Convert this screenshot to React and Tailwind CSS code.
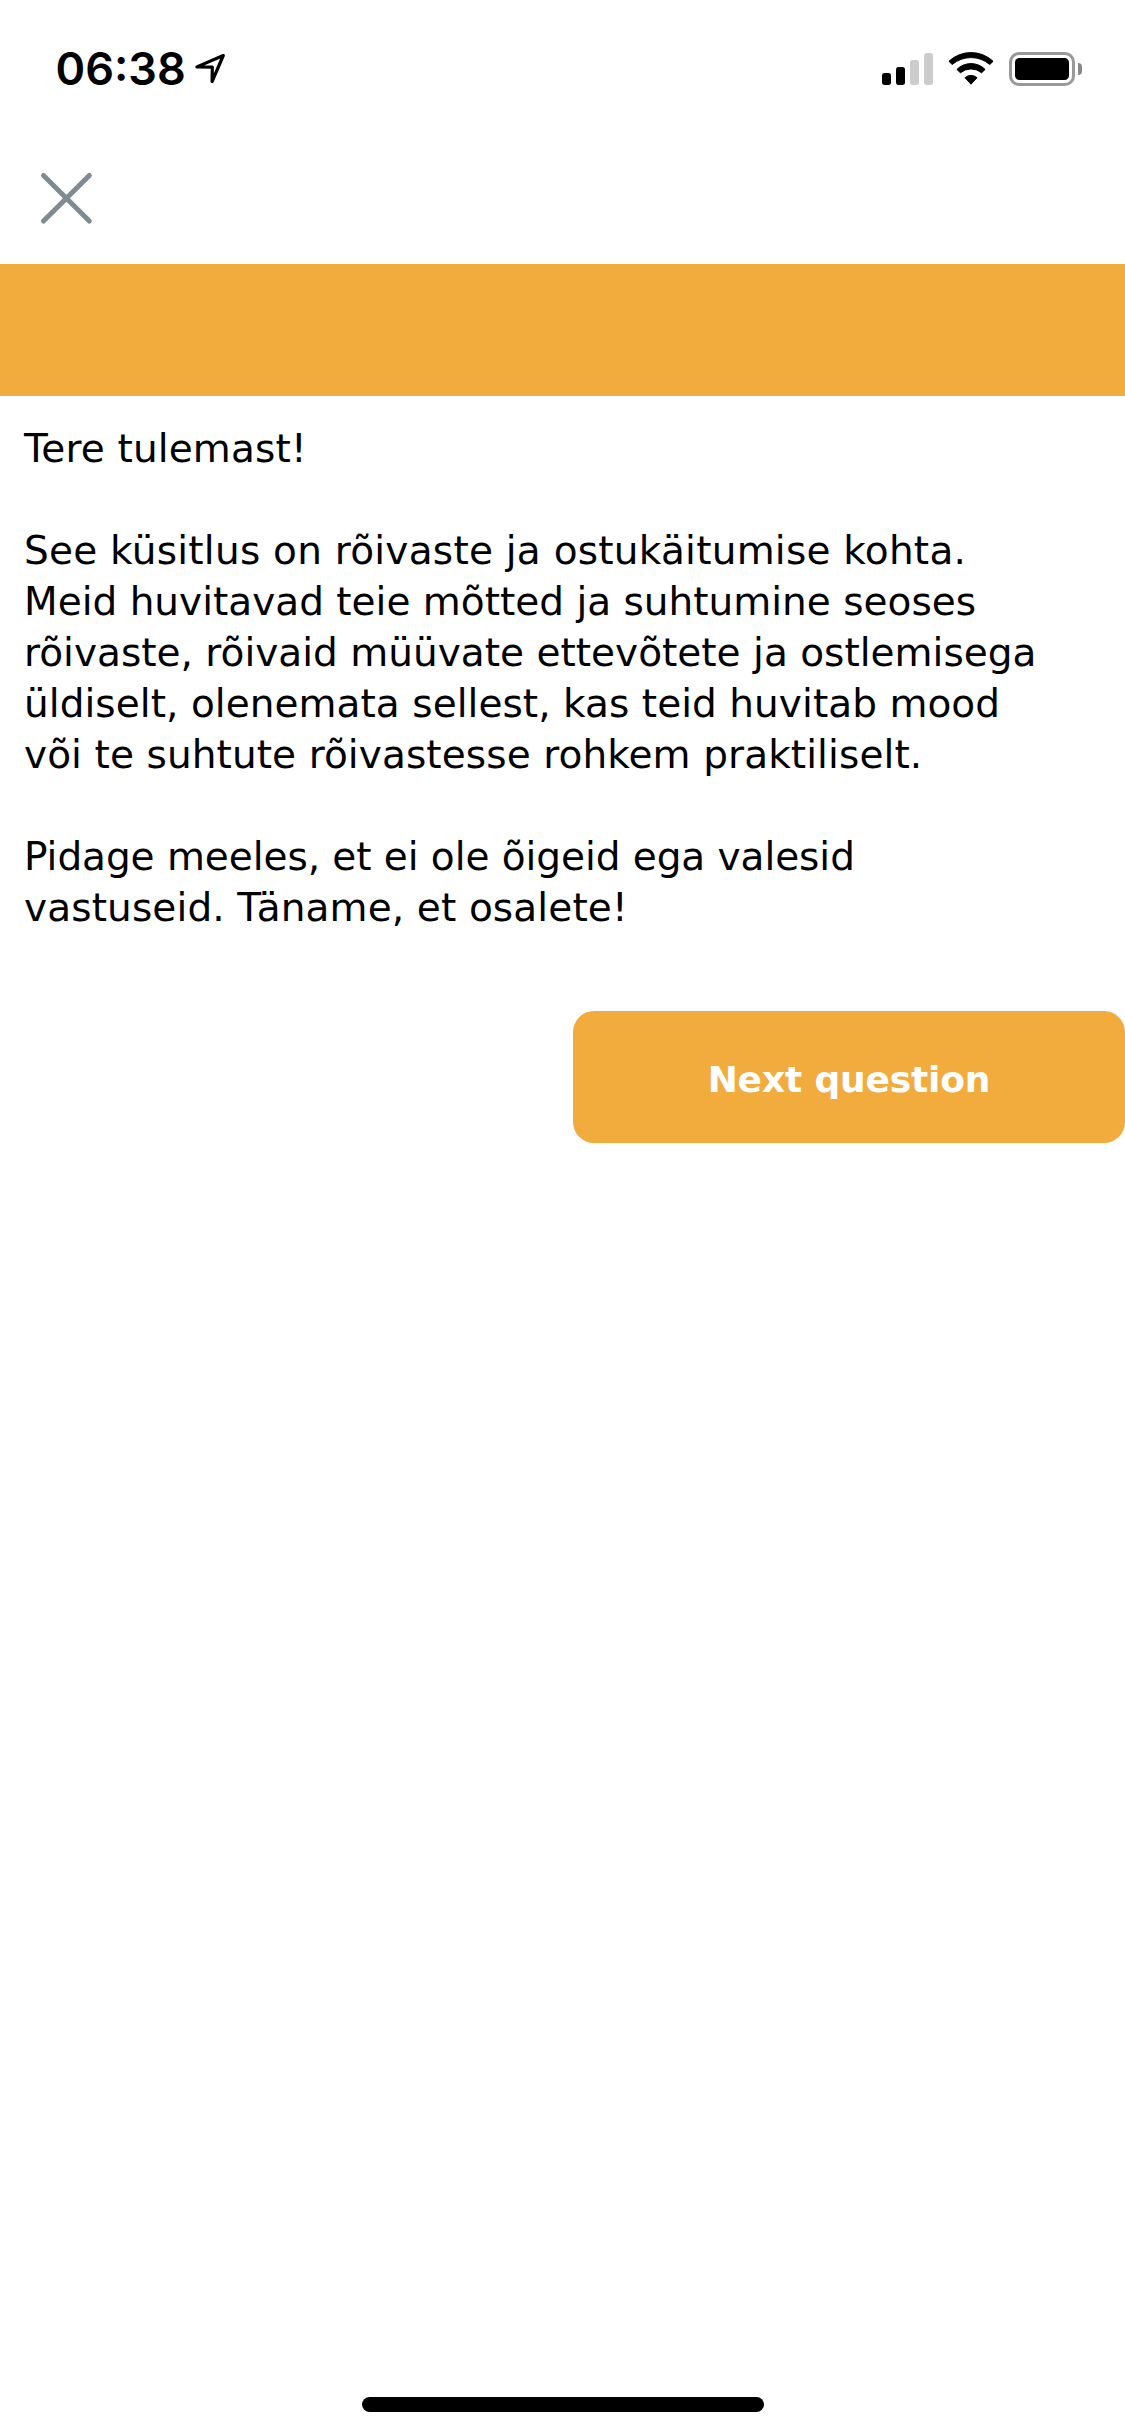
const paragraphs = [
  [{ text: "Tere tulemast!", tracking: "tracking-[0.14px]" }],
  [
    { text: "See küsitlus on rõivaste ja ostukäitumise kohta.", tracking: "tracking-[0.24px]" },
    { text: "Meid huvitavad teie mõtted ja suhtumine seoses", tracking: "tracking-normal" },
    { text: "rõivaste, rõivaid müüvate ettevõtete ja ostlemisega", tracking: "tracking-[0.01px]" },
    { text: "üldiselt, olenemata sellest, kas teid huvitab mood", tracking: "tracking-[0.05px]" },
    { text: "või te suhtute rõivastesse rohkem praktiliselt.", tracking: "tracking-[0.09px]" },
  ],
  [
    { text: "Pidage meeles, et ei ole õigeid ega valesid", tracking: "tracking-[-0.06px]" },
    { text: "vastuseid. Täname, et osalete!", tracking: "tracking-[0.12px]" },
  ],
];

function LocationArrow() {
  return (
    <svg className="ml-[7px] mt-[10px]" width="34" height="34" viewBox="193 52 34 34" fill="none">
      <path d="M223.3 55.5 L196.9 66.9 L212.3 67.1 L212.1 81.5 Z" stroke="#000" strokeWidth="3.2" strokeLinejoin="round" />
    </svg>
  );
}

function SignalBars() {
  return (
    <div className="flex h-8 items-end gap-[5px]">
      <span className="h-3 w-[9px] rounded-[2.7px] bg-black" />
      <span className="h-[18px] w-[9px] rounded-[2.7px] bg-black" />
      <span className="h-[25px] w-[9px] rounded-[2.7px] bg-[#ccc]" />
      <span className="h-8 w-[9px] rounded-[2.7px] bg-[#ccc]" />
    </div>
  );
}

function Wifi() {
  return (
    <svg className="ml-[15px]" width="46" height="33" viewBox="948 52 46 33" stroke="#000" strokeWidth="1" strokeLinejoin="round">
      <path d="M948.9 61.3 A32.3 32.3 0 0 1 993.1 61.3 L989.8 64.5 A29 29 0 0 0 952.2 64.5 Z" />
      <path d="M956.9 69.4 A20 20 0 0 1 985.1 69.4 L981.6 72.8 A16.5 16.5 0 0 0 960.4 72.8 Z" />
      <path d="M965 77.7 A9 9 0 0 1 977 77.7 L971 84.2 Z" />
    </svg>
  );
}

function Battery() {
  return (
    <div className="ml-[15px] flex items-center">
      <div className="h-[34px] w-[66px] rounded-[10px] border-[3px] border-[#999] p-[3px]">
        <div className="h-full w-full rounded-[4.5px] bg-black" />
      </div>
      <div className="ml-[3px] h-3 w-1 rounded-r-full bg-[#888]" />
    </div>
  );
}

export default function App() {
  return (
    <div className="flex h-[2436px] w-[1125px] flex-col overflow-hidden bg-white text-black">
      <header className="flex h-[132px] items-start justify-between pl-[55.5px] pr-[43px] pt-[42px]">
        <div className="flex items-start">
          <span className="w-[130.5px] whitespace-nowrap font-['Inter',sans-serif] text-[45px] font-semibold leading-[54px]">06:38</span>
          <LocationArrow />
        </div>
        <div className="mt-[10px] flex items-start">
          <div className="pt-px"><SignalBars /></div>
          <Wifi />
          <Battery />
        </div>
      </header>

      <nav className="h-[132px] pl-[38px] pt-[38px]">
        <button aria-label="Close" className="block">
          <svg width="56" height="56" viewBox="38 170 56 56" fill="none">
            <path d="M43.5 175.4 L89.3 221 M89.3 175.4 L43.5 221" stroke="#7e8c91" strokeWidth="5" strokeLinecap="round" />
          </svg>
        </button>
      </nav>

      <div className="h-[132px] shrink-0 bg-[#f2ac3d]" />

      <main className="pt-[27px] font-['DejaVu_Sans',sans-serif]">
        <div className="flex flex-col gap-[51px] pl-6 text-[39px] leading-[51px]">
          {paragraphs.map((lines) => (
            <p key={lines[0].text}>
              {lines.map((line) => (
                <span key={line.text} className={`block whitespace-nowrap ${line.tracking}`}>{line.text}</span>
              ))}
            </p>
          ))}
        </div>
        <div className="mt-[78px] flex justify-end">
          <button className="h-[132px] w-[552px] rounded-[21px] bg-[#f2ac3d] pt-[5px] text-[36px] font-bold leading-[42px] tracking-[-0.15px] text-white">
            Next question
          </button>
        </div>
      </main>

      <div className="mb-6 mt-auto h-[15px] w-[402px] self-center rounded-full bg-black" />
    </div>
  );
}
